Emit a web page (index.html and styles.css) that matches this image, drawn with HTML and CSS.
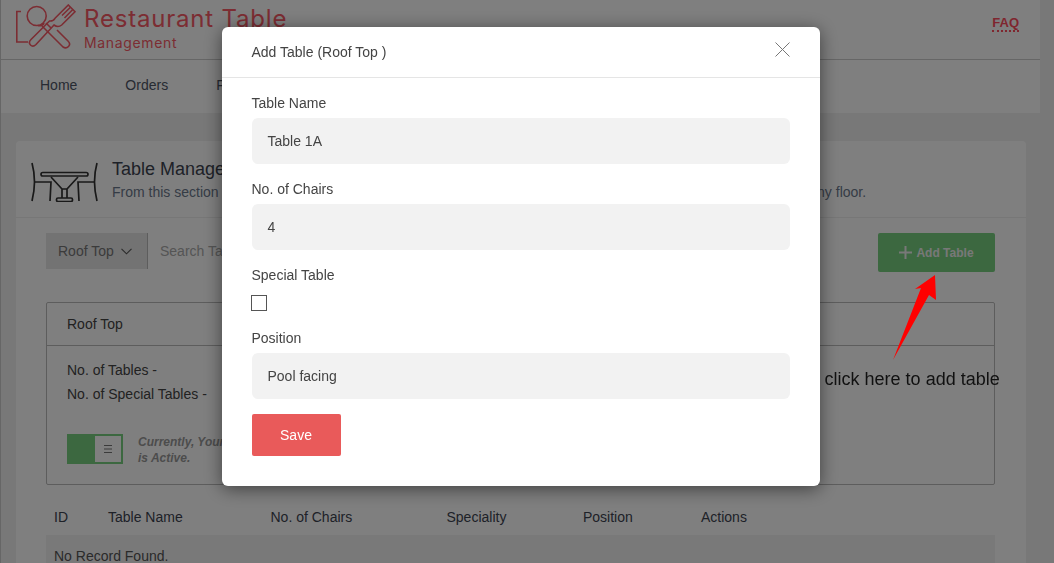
FILE: index.html
```html
<!DOCTYPE html>
<html lang="en">
<head>
<meta charset="utf-8">
<title>Table Management</title>
<link rel="stylesheet" href="styles.css">
</head>
<body>
<div class="shell">
  <header class="topbar">
    <div class="brand">
      <svg class="logo" width="66" height="46" viewBox="0 0 66 46" fill="none" stroke="#f85a66" stroke-width="1.6">
        <path d="M5 7.500H.8V38H12"/>
        <circle cx="20.700" cy="12" r="9.500"/>
        <path d="M22 21.500c3 .8 5.500-.5 6-2.500"/>
        <path d="M26 22L47 43Q50 45 52.500 42.500Q55 40 52 37L41 26"/>
        <path d="M30 19L35 24"/>
        <path d="M39 14.300L52.300 1L59 7.700L45.700 21Q42 24 38 21L20 40.500Q17 43.500 14.500 41Q12 38.500 15 35.500L33.500 17Q37 17.500 39 14.300Z"/>
        <path d="M54.500 3.200L46 11.500M56.800 5.500L48.500 14"/>
      </svg>
      <div class="brand-text">
        <div class="brand-title">Restaurant Table</div>
        <div class="brand-sub">Management</div>
      </div>
    </div>
    <a class="faq">FAQ</a>
  </header>
  <nav class="nav">
    <a>Home</a><a>Orders</a><a>Floors</a>
  </nav>
  <main class="main">
    <section class="card">
      <div class="card-head">
        <svg class="table-icon" width="67" height="40" viewBox="0 0 67 40" fill="none" stroke="#333" stroke-width="1.700">
          <path d="M1 1c3 11 3 26 0 38"/>
          <path d="M3 20H20L19 39"/>
          <path d="M66 1c-3 11-3 26 0 38"/>
          <path d="M64 20H47L48 39"/>
          <rect x="10" y="10.500" width="47" height="3.500" rx="1.700"/>
          <path d="M20 15L31 27V36M47 15L36 27V36M31 27H36"/>
          <rect x="25.500" y="36" width="16" height="3.500" rx="1.500"/>
        </svg>
        <div>
          <h1 class="card-title">Table Management</h1>
          <p class="card-sub">From this section you can add new tables, and manage all of the tables, along with their status and speciality for any floor.</p>
        </div>
      </div>
      <div class="toolbar">
        <div class="search-group">
          <div class="select">Roof Top
            <svg width="11" height="7" viewBox="0 0 11 7" fill="none" stroke="#555" stroke-width="1.100"><path d="M.5 .8L5.500 5.800 10.500 .8"/></svg>
          </div>
          <div class="search">Search Table</div>
        </div>
        <button class="add-btn">
          <svg width="13" height="13" viewBox="0 0 13 13" stroke="#f0f0f0" stroke-width="2"><path d="M6.500 0V13M0 6.500H13"/></svg>
          Add Table
        </button>
      </div>
      <div class="panel">
        <div class="panel-head">Roof Top</div>
        <div class="panel-body">
          <p class="stat">No. of Tables -</p>
          <p class="stat">No. of Special Tables -</p>
          <div class="status">
            <div class="toggle">
              <span class="toggle-knob">
                <svg width="8" height="8" viewBox="0 0 8 8" stroke="#777" stroke-width="1"><path d="M0 .5H8M0 4H8M0 7.500H8"/></svg>
              </span>
            </div>
            <p class="status-text">Currently, Your Floor<br>is Active.</p>
          </div>
        </div>
      </div>
      <table class="records">
        <thead>
          <tr><th class="c-id">ID</th><th class="c-name">Table Name</th><th class="c-chairs">No. of Chairs</th><th class="c-spec">Speciality</th><th class="c-pos">Position</th><th>Actions</th></tr>
        </thead>
        <tbody>
          <tr><td colspan="6">No Record Found.</td></tr>
        </tbody>
      </table>
    </section>
  </main>
</div>

<div class="overlay">
  <div class="modal">
    <div class="modal-head">
      <span>Add Table (Roof Top )</span>
      <svg width="15" height="15" viewBox="0 0 15 15" stroke="#777" stroke-width="1" fill="none"><path d="M.5 .5L14.500 14.500M14.500 .5L.5 14.500"/></svg>
    </div>
    <form class="modal-body">
      <div class="field">
        <div class="label">Table Name</div>
        <div class="input">Table 1A</div>
      </div>
      <div class="field">
        <div class="label">No. of Chairs</div>
        <div class="input">4</div>
      </div>
      <div class="field field-check">
        <div class="label">Special Table</div>
        <div class="checkbox"></div>
      </div>
      <div class="field">
        <div class="label">Position</div>
        <div class="input">Pool facing</div>
      </div>
      <div class="save">Save</div>
    </form>
  </div>
</div>

<svg class="arrow" width="50" height="90" viewBox="0 0 50 90"><polygon points="43,1 23,15 29,14 1,86 37,21 44,26" fill="#ff0000"/></svg>
<div class="note">click here to add table</div>
</body>
</html>
```

FILE: styles.css
```css
* { box-sizing: border-box; }
html, body { margin: 0; height: 563px; overflow: hidden; }
body {
  background: #f1f1f1;
  border-left: 1px solid #ccc;
  font-family: "Liberation Sans", Arial, sans-serif;
  font-size: 14px;
  color: #333;
  position: relative;
}
.shell { width: 1039px; }

.topbar {
  height: 60px;
  background: #fff;
  border-bottom: 1px solid #ccc;
  display: flex;
  justify-content: space-between;
  padding: 4px 21px 0 15px;
}
.brand { display: flex; gap: 2px; }
.brand-text { color: #f85a66; }
.brand-title { font-family: "Inter", sans-serif; font-size: 24px; line-height: 29px; letter-spacing: .8px; }
.brand-sub { font-family: "Inter", sans-serif; font-size: 14px; line-height: 17px; letter-spacing: .65px; margin-top: 1px; }
.faq {
  font-weight: 700;
  color: #ff4d5e;
  font-size: 13px;
  line-height: 15px;
  align-self: flex-start;
  margin-top: 11px;
  border-bottom: 2px dotted #ff4d5e;
}

.nav {
  height: 53px;
  background: #fff;
  display: flex;
  align-items: flex-start;
  gap: 48px;
  padding: 17px 0 0 39px;
  line-height: 16px;
  color: #4e5666;
}

.main { padding: 28px 14px 0 15px; }
.card { background: #fff; border-radius: 4px; height: 440px; }
.card-head {
  height: 77px;
  border-bottom: 1px solid #eee;
  display: flex;
  align-items: flex-start;
  gap: 14px;
  padding: 21px 0 0 15px;
}
.card-title { margin: -4px 0 0; font-size: 18px; font-weight: 400; line-height: 22px; white-space: nowrap; color: #3c4350; }
.card-sub { margin: 3px 0 0; font-size: 14px; line-height: 18px; color: #6b788c; white-space: nowrap; }

.toolbar {
  display: flex;
  justify-content: space-between;
  align-items: flex-start;
  padding: 15px 31px 0 30px;
  height: 84px;
}
.search-group { display: flex; height: 36px; }
.select {
  width: 102px;
  background: #e6e6e6;
  border-right: 1px solid #bbb;
  display: flex;
  align-items: center;
  gap: 7px;
  padding-left: 12px;
  color: #777;
}
.search { width: 300px; background: #fff; color: #aaa; padding: 9px 12px; line-height: 18px; }
.add-btn {
  width: 117px;
  height: 39px;
  border: 0;
  border-radius: 2px;
  background: #78d080;
  color: #f0f0f0;
  font: 700 12px "Liberation Sans", Arial, sans-serif;
  display: flex;
  align-items: center;
  justify-content: center;
  gap: 4px;
}

.panel { margin: 0 31px 0 30px; height: 183px; border: 1px solid #bbb; border-radius: 2px; }
.panel-head { height: 43px; border-bottom: 1px solid #bbb; padding: 12px 20px; line-height: 18px; color: #444; }
.panel-body { padding: 15px 20px; }
.stat { margin: 0 0 6px; line-height: 18px; color: #444; }
.status { display: flex; gap: 15px; margin-top: 31px; }
.toggle { width: 56px; height: 30px; background: #78d080; padding: 2px 2px 2px 28px; }
.toggle-knob { display: flex; height: 26px; background: #fff; align-items: center; justify-content: center; }
.status-text { margin: 0; font-size: 12px; font-weight: 700; font-style: italic; line-height: 16px; color: #999; }

.records { margin: 16px 31px 0 30px; width: 949px; border-collapse: collapse; table-layout: fixed; }
.records th { font-weight: 400; text-align: left; padding: 0 8px 2px; height: 34px; color: #3c4350; }
.records td { background: #f2f2f2; padding: 12px 8px 0; height: 44px; vertical-align: top; line-height: 18px; color: #555; }
.c-id { width: 54px; }
.c-name { width: 162.5px; }
.c-chairs { width: 176px; }
.c-spec { width: 136.5px; }
.c-pos { width: 118px; }

.overlay {
  position: fixed;
  inset: 0;
  background: rgba(0, 0, 0, .5);
  padding: 27px 0 0 221.5px;
}
.modal {
  width: 598.5px;
  height: 459px;
  background: #fff;
  border-radius: 6px;
  box-shadow: 0 3px 18px rgba(0, 0, 0, .5);
}
.modal-head {
  height: 51px;
  border-bottom: 1px solid #e5e5e5;
  display: flex;
  justify-content: space-between;
  align-items: center;
  padding: 0 30px;
  color: #444;
}
.modal-head svg { margin-top: -6px; }
.modal-body { padding: 15px 30px 0; }
.field { margin-bottom: 15px; }
.field-check { margin-bottom: 17px; }
.label { line-height: 20px; margin-bottom: 5px; color: #444; }
.input {
  height: 46px;
  background: #f2f2f2;
  border-radius: 6px;
  padding: 0 16px;
  line-height: 46px;
  color: #444;
}
.checkbox { width: 16.5px; height: 16px; margin: 10px 0 0 -1px; border: 1.5px solid #555; background: #fff; }
.save {
  width: 89px;
  height: 42px;
  background: #e95a5a;
  border-radius: 2px;
  color: #fff;
  line-height: 42px;
  text-align: center;
}

.arrow { position: fixed; left: 892px; top: 274px; }
.note { position: fixed; left: 824.6px; top: 369px; font-size: 18px; line-height: 21px; color: #111; white-space: nowrap; }
```
